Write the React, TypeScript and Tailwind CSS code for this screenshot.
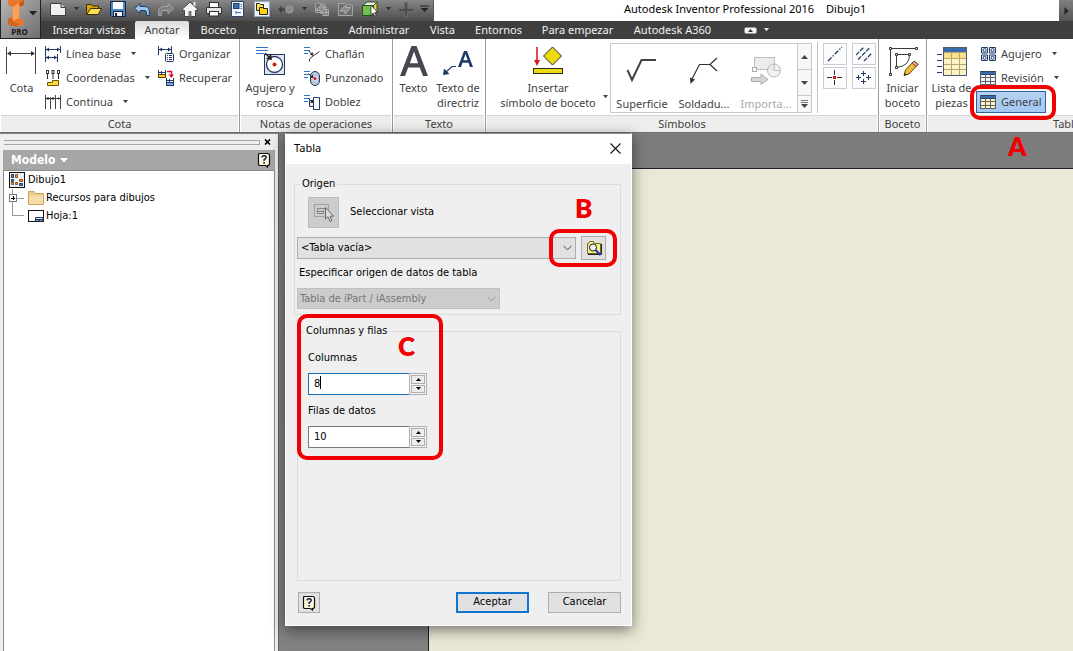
import React from 'react';

const NAVY = '#1f3864';

function Icon({ w = 16, h = 16, children, crisp = false }: { w?: number; h?: number; children: React.ReactNode; crisp?: boolean }) {
  return (
    <svg width={w} height={h} viewBox={`0 0 ${w} ${h}`} fill="none" className="shrink-0" aria-hidden="true" shapeRendering={crisp ? 'crispEdges' : undefined}>
      {children}
    </svg>
  );
}

function Caret({ fill = '#444' }: { fill?: string }) {
  return (
    <Icon w={7} h={4}>
      <path d="M1 0H6L3.5 3.2Z" fill={fill} />
    </Icon>
  );
}

/* ---------- quick access toolbar ---------- */

function QatButton({ label, children, narrow = false }: { label: string; children: React.ReactNode; narrow?: boolean }) {
  return (
    <button aria-label={label} className={`flex h-[18px] shrink-0 items-center justify-center ${narrow ? 'w-3' : 'w-6'}`}>
      {children}
    </button>
  );
}

function QuickAccess() {
  return (
    <div className="flex h-full w-[393px] shrink-0 items-start overflow-hidden border-r border-[#555] bg-linear-to-b from-[#888] to-[#4c4c4c] pl-[5px]">
      <QatButton label="Nuevo">
        <Icon>
          <path d="M.5 2.5H11L15.5 6.5V14.5H.5Z" fill="#f1f1f1" stroke="#3c4148" />
          <path d="M11 2.5V6.5H15.5" fill="#c8ccd1" stroke="#3c4148" />
        </Icon>
      </QatButton>
      <QatButton label="Opciones de nuevo" narrow><Caret fill="#333" /></QatButton>
      <QatButton label="Abrir">
        <Icon>
          <path d="M.5 13V3.5H5L6.5 5H12.5V8" fill="#d9a514" stroke="#3d2f05" />
          <path d="M.8 13.5L4.5 7.5H15.5L12 13.5Z" fill="#ffdf5a" stroke="#3d2f05" />
        </Icon>
      </QatButton>
      <QatButton label="Guardar">
        <Icon>
          <path d="M.5 .5H15.5V15.5H2L.5 14Z" fill="#4c86c6" stroke="#14233f" />
          <rect x="3" y="1" width="10" height="7" fill="#fff" />
          <rect x="3.500" y="10.500" width="9" height="5" fill="#f4f4f4" stroke="#14233f" />
          <rect x="5" y="12" width="2" height="3" fill="#14233f" />
        </Icon>
      </QatButton>
      <QatButton label="Deshacer">
        <Icon>
          <path d="M.7 7.5L6 2.500V5.5H10C14 5.5 15.300 8 15.300 10V14.5H12.5V11.5C12.500 10 11.500 9.500 10 9.500H6V12.500Z" fill="#9cc6ee" stroke="#1c3f6c" />
        </Icon>
      </QatButton>
      <QatButton label="Rehacer">
        <Icon>
          <path d="M15.300 7.500L10 2.500V5.500H6C2 5.500 .7 8 .7 10V14.500H3.500V11.500C3.500 10 4.500 9.500 6 9.500H10V12.500Z" fill="#808080" stroke="#a6a6a6" />
        </Icon>
      </QatButton>
      <QatButton label="Inicio">
        <Icon>
          <path d="M8 1L15.500 8V9.500H13.500V15.500H2.500V9.500H.5V8Z" fill="#f5f5f5" stroke="#444" />
          <path d="M11.500 1H13.500V5.500L11.500 4Z" fill="#eee" />
          <path d="M6.500 10H9.500V15.500H6.500Z" fill="#777" />
        </Icon>
      </QatButton>
      <QatButton label="Imprimir">
        <Icon>
          <rect x="3.500" y="1.500" width="9" height="5" fill="#fff" stroke="#333" />
          <path d="M1 6.500H15Q15.500 6.500 15.500 7V12.500H.5V7Q.5 6.500 1 6.500Z" fill="#e4e4e4" stroke="#333" />
          <rect x="3.500" y="10.500" width="9" height="4.500" fill="#fff" stroke="#333" />
        </Icon>
      </QatButton>
      <QatButton label="Propiedades">
        <Icon>
          <rect x="1.500" y=".5" width="12" height="15" fill="#f4f7fb" stroke="#2c4566" />
          <rect x="3.500" y="2.500" width="5.500" height="5" fill="#3970ad" stroke="#1c3f6c" />
          <path d="M10.500 3.500H12M10.500 5.500H12M10.500 7.500H12M6 11.500H11M6 10V13" stroke="#3970ad" />
        </Icon>
      </QatButton>
      <QatButton label="Proyectos">
        <Icon>
          <rect x=".5" y=".5" width="15" height="15" fill="#eef4fb" stroke="#93a9c2" />
          <path d="M2.500 9.500V2.500H5.500L6.500 3.500H9.500V9.500Z" fill="#ffe14d" stroke="#222" />
          <path d="M5.500 13.500V6.500H8.500L9.500 7.500H13.500V13.500Z" fill="#ffd400" stroke="#222" />
        </Icon>
      </QatButton>
      <QatButton label="Retorno">
        <Icon>
          <circle cx="11.500" cy="8.500" r="3.600" fill="#8a8a8a" stroke="#9d9d9d" />
          <path d="M0 8.500L4 5V7.500H7V9.500H4V12Z" fill="#3f3f3f" />
        </Icon>
      </QatButton>
      <QatButton label="Opciones de retorno" narrow><Caret fill="#2f2f2f" /></QatButton>
      <QatButton label="Actualizar todo">
        <Icon>
          <path d="M1.500 3L5 1.500L6 3H10.500V11.500H1.500Z" stroke="#a6a6a6" fill="#6f6f6f" />
          <path d="M2 9L8 3.500V6H12.500L7 13V10Z" fill="#8a8a8a" stroke="#b5b5b5" />
          <path d="M9 8.500H14.500V14.500H9Z" fill="#777" stroke="#aaa" />
          <path d="M12 9V14M9.500 11.500H14.500" stroke="#b5b5b5" />
        </Icon>
      </QatButton>
      <QatButton label="Actualizar">
        <Icon>
          <path d="M.5 2.500H8L9.500 4H14.500V14.500H.5Z" fill="#6f6f6f" stroke="#a6a6a6" />
          <path d="M2 10L8 4V6.500H12.500L7 13V10Z" fill="#8a8a8a" stroke="#b5b5b5" />
        </Icon>
      </QatButton>
      <QatButton label="Seleccionar">
        <Icon>
          <path d="M1 4.500L5 1H15L12 4.500Z" fill="#eef6e4" stroke="#2f4f22" />
          <path d="M11.500 4.500L15 1V11L11.500 14.500Z" fill="#e6ce3d" stroke="#2f4f22" />
          <rect x=".5" y="4.500" width="10.500" height="10" fill="#6fbf4a" stroke="#2f4f22" />
          <path d="M9 4V14L11.200 12L12.700 15.200L14.200 14.500L12.700 11.500H15.500Z" fill="#fff" stroke="#222" strokeWidth=".7" />
        </Icon>
      </QatButton>
      <QatButton label="Opciones de selección" narrow><Caret fill="#2f2f2f" /></QatButton>
      <QatButton label="Añadir">
        <Icon>
          <path d="M6.500 1.500H9.500V7.500H15.500V10.500H9.500V15.500H6.500V10.500H.5V7.500H6.500Z" fill="#4d4d4d" stroke="#6a6a6a" />
        </Icon>
      </QatButton>
      <QatButton label="Personalizar" narrow>
        <Icon w={9} h={8}>
          <path d="M0 1H9" stroke="#262626" />
          <path d="M.5 3H8.500L4.500 7Z" fill="#262626" />
        </Icon>
      </QatButton>
    </div>
  );
}

/* ---------- ribbon ---------- */

function Tab({ children, width, active = false }: { children: React.ReactNode; width: string; active?: boolean }) {
  return (
    <button
      role="tab"
      aria-selected={active}
      className={`flex h-full shrink-0 items-center justify-center whitespace-nowrap ${width} ${active ? 'rounded-t-[2px] bg-linear-to-b from-[#dcdcdc] to-white text-[#3c3c3c]' : 'text-[#f0f0f0]'}`}
    >
      {children}
    </button>
  );
}

function Panel({ title, width, children }: { title: string; width: string; children: React.ReactNode }) {
  return (
    <section className={`flex h-full shrink-0 flex-col border-r border-[#9c9c9c] ${width}`}>
      <div className="flex h-[76px] pt-[3px]">{children}</div>
      <h2 className="mx-px flex flex-1 items-center justify-center border-t border-[#d5d5d5] bg-[#eeeeee]">{title}</h2>
    </section>
  );
}

function BigButton({ icon, lines, width }: { icon: React.ReactNode; lines: string[]; width: string }) {
  return (
    <button className={`flex shrink-0 flex-col items-center whitespace-nowrap leading-[15px] ${width}`}>
      <span className="flex h-[38px] items-center justify-center">{icon}</span>
      {lines.map((l) => (
        <span key={l}>{l}</span>
      ))}
    </button>
  );
}

function RowButton({ icon, label, drop = false }: { icon: React.ReactNode; label: string; drop?: boolean }) {
  return (
    <button className="flex h-6 items-center gap-[5px] whitespace-nowrap">
      {icon}
      <span>{label}</span>
      {drop && (
        <span className="pl-1">
          <Caret />
        </span>
      )}
    </button>
  );
}

function NoteLines() {
  return <path d="M0 1.500H6M0 4.500H6M0 7.500H4" stroke="#2f74c0" />;
}

function TableIcon({ fill = '#fff3bf' }: { fill?: string }) {
  return (
    <Icon crisp>
      <rect x="0" y="1" width="16" height="14" fill={fill} />
      <rect x="0" y="1" width="16" height="3" fill="#3b6ca8" />
      <path d="M.5 1V15M5.500 4V15M10.500 4V15M15.500 1V15M0 7.500H16M0 11.500H16M0 14.500H16" stroke="#5a636c" />
      <path d="M0 1.500H16M0 4.500H16" stroke="#2c4a70" />
    </Icon>
  );
}

function ToolTile({ label, children }: { label: string; children: React.ReactNode }) {
  return (
    <button aria-label={label} className="flex h-[22px] w-6 items-center justify-center border border-[#c9ced6] bg-[#fcfcfc]">
      {children}
    </button>
  );
}

function GalleryItem({ label, children, muted = false }: { label: string; children: React.ReactNode; muted?: boolean }) {
  return (
    <button disabled={muted} className={`flex w-[62px] shrink-0 flex-col items-center whitespace-nowrap leading-[15px] ${muted ? 'text-[#a9a9a9]' : ''}`}>
      <span className="flex h-[52px] items-center justify-center">{children}</span>
      <span>{label}</span>
    </button>
  );
}

function Ribbon() {
  return (
    <div className="flex h-[94px] shrink-0 overflow-hidden border-b border-[#6d6d6d] bg-white text-[11px] text-[#3f3f3f]">
      <Panel title="Cota" width="w-[240px]">
        <BigButton
          width="w-[43px]"
          lines={['Cota']}
          icon={
            <Icon w={31} h={28}>
              <path d="M.5 0V27M29.500 0V27M2 6.500H28" stroke="#444" />
              <path d="M1 6.500L5 4V9ZM29 6.500L25 4V9Z" fill="#333" />
            </Icon>
          }
        />
        <div className="flex w-[115px] flex-col items-start pl-[2px]">
          <RowButton
            drop
            label="Línea base"
            icon={
              <Icon>
                <path d="M.5 0V16M15.500 0V7M12.500 8V16M1 3.500H15M1 11.500H12" stroke={NAVY} />
                <path d="M1 3.500L4 1.500V5.500ZM15 3.500L12 1.500V5.500ZM1 11.500L4 9.500V13.500ZM12 11.500L9 9.500V13.500Z" fill={NAVY} />
              </Icon>
            }
          />
          <RowButton
            drop
            label="Coordenadas"
            icon={
              <Icon>
                <path d="M2.500 3V9M8 3V9M13.500 3V9" stroke="#333" />
                <rect x="1.500" y=".5" width="2" height="3" fill="#fff" stroke="#333" />
                <rect x="7" y=".5" width="2" height="3" fill="#fff" stroke="#333" />
                <rect x="12.500" y=".5" width="2" height="3" fill="#fff" stroke="#333" />
                <path d="M2.500 12.500H7.500V10.500H13.500V15.500H2.500Z" fill="#ffdd3c" stroke="#6b5600" />
              </Icon>
            }
          />
          <RowButton
            drop
            label="Continua"
            icon={
              <Icon>
                <path d="M.5 1V15M5.500 3V15M10.500 1V15M15.500 1V15M1 4.500H15" stroke="#444" />
                <path d="M1 4.500L3 3V6ZM5 4.500L3 3V6ZM6 4.500L8 3V6ZM10 4.500L8 3V6ZM15 4.500L13 3V6Z" fill="#333" />
              </Icon>
            }
          />
        </div>
        <div className="flex flex-col items-start">
          <RowButton
            label="Organizar"
            icon={
              <Icon>
                <path d="M.5 0V9M13.500 0V7M1 3.500H13" stroke={NAVY} />
                <path d="M1 3.500L4 1.500V5.500ZM13 3.500L10 1.500V5.500Z" fill={NAVY} />
                <rect x="7.500" y="7.500" width="8" height="8" rx="1" fill="#fff" stroke={NAVY} />
                <path d="M9 9.500H10M11 9.500H14M9 11.500H10M11 11.500H14M9 13.500H10M11 13.500H14" stroke={NAVY} />
              </Icon>
            }
          />
          <RowButton
            label="Recuperar"
            icon={
              <Icon>
                <path d="M.5 0V4M3.500 1V4M7.500 0V4M1 2.500H7" stroke={NAVY} />
                <rect x=".5" y="4.500" width="7" height="3" fill="#ffc928" stroke="#5f4700" />
                <path d="M9 1.500H13.500V5" stroke="#d0161b" strokeWidth="1.500" />
                <path d="M10.500 4.500H16L13.300 8Z" fill="#d0161b" />
                <path d="M8.500 8V12M11.500 9V12M15.500 8V12M9 10.500H15" stroke={NAVY} />
                <rect x="8.500" y="12.500" width="7" height="3" fill="#72a9e6" stroke={NAVY} />
              </Icon>
            }
          />
        </div>
      </Panel>

      <Panel title="Notas de operaciones" width="w-[153px]">
        <BigButton
          width="w-[60px]"
          lines={['Agujero y', 'rosca']}
          icon={
            <Icon w={31} h={32}>
              <path d="M1 2.500H13M1 5.500H13M1 8.500H9" stroke="#2f74c0" />
              <rect x="9.500" y="9.500" width="20" height="20" fill="#dfe5ec" stroke={NAVY} />
              <circle cx="19.500" cy="19.500" r="8" fill="#fff" stroke={NAVY} strokeWidth="1.300" />
              <circle cx="19.500" cy="19.500" r="2" fill="#d0161b" />
              <path d="M10 8L14 12" stroke="#222" strokeWidth="1.300" />
              <path d="M17 15L11 14L16 9Z" fill="#222" />
            </Icon>
          }
        />
        <div className="flex flex-col items-start pl-1">
          <RowButton
            label="Chaflán"
            icon={
              <Icon>
                <NoteLines />
                <path d="M5 5L8 8.500M5.500 15.500V13L9 10L15.500 5.500" stroke="#333" />
                <path d="M9.500 10L6 8.500L8.500 6Z" fill="#222" />
              </Icon>
            }
          />
          <RowButton
            label="Punzonado"
            icon={
              <Icon>
                <NoteLines />
                <rect x="6.500" y="1.500" width="9" height="14" rx="4.500" fill="#b9c8d8" stroke={NAVY} />
                <circle cx="11" cy="8.500" r="2.500" fill="#e3eaf2" />
                <circle cx="11" cy="8.500" r="1.500" fill="#d0161b" />
                <path d="M4.500 3.500L8 7" stroke="#222" />
                <path d="M9.500 8L6 7.500L9 4.500Z" fill="#222" />
              </Icon>
            }
          />
          <RowButton
            label="Doblez"
            icon={
              <Icon>
                <NoteLines />
                <path d="M5.500 6.500H15.500V12.500H12.500V15.500H9.500V12.500H5.500Z" fill="#e6ebf1" stroke={NAVY} />
                <path d="M9.500 3.500H15.500V15.500H9.500Z" fill="#f7f9fb" stroke={NAVY} />
                <path d="M4.500 4.500L8 8" stroke="#222" />
                <path d="M9.500 9L6 8.500L9 5.500Z" fill="#222" />
              </Icon>
            }
          />
        </div>
      </Panel>

      <Panel title="Texto" width="w-[93px]">
        <BigButton
          width="w-[41px]"
          lines={['Texto']}
          icon={
            <Icon w={30} h={32}>
              <path d="M1 31L12.500 1H17.500L29 31H24L20.800 22.500H9.200L6 31ZM10.800 18.300H19.200L15 6.500Z" fill="#474752" fillRule="evenodd" />
            </Icon>
          }
        />
        <BigButton
          width="w-[48px]"
          lines={['Texto de', 'directriz']}
          icon={
            <Icon w={32} h={28}>
              <path d="M16 20L22 4H25L31 20H28L26.500 15.800H20.500L19 20ZM21.300 13.300H25.700L23.500 7Z" fill={NAVY} fillRule="evenodd" />
              <path d="M14 19.500H10L4 25" stroke={NAVY} strokeWidth="1.200" />
              <path d="M1 28L2 21.500L7.500 27Z" fill={NAVY} />
            </Icon>
          }
        />
      </Panel>

      <Panel title="Símbolos" width="w-[393px]">
        <BigButton
          width="w-[124px]"
          lines={['Insertar', 'símbolo de boceto']}
          icon={
            <Icon w={32} h={30}>
              <path d="M5 1V15" stroke="#d0161b" strokeWidth="1.500" />
              <path d="M2 14H8L5 20Z" fill="#d0161b" />
              <path d="M20.500 1L29.500 10L20.500 19L11.500 10Z" fill="#eed90f" stroke="#2a2a2a" />
              <rect x="1.500" y="22.500" width="29" height="5" fill="#eed90f" stroke="#2a2a2a" />
            </Icon>
          }
        />
        <div className="-ml-2 flex w-[7px] items-end pb-4">
          <Caret />
        </div>
        <div className="mt-px ml-auto flex h-[70px] w-[202px] border border-[#c4c9d0]">
          <GalleryItem label="Superficie">
            <Icon w={32} h={28}>
              <path d="M1.500 14L6 24L15.500 4H30" stroke="#444" strokeWidth="2" />
            </Icon>
          </GalleryItem>
          <GalleryItem label="Soldadu...">
            <Icon w={30} h={30}>
              <path d="M3 24L10.500 9.500H21L28 3M21 9.500L28 16" stroke="#333" strokeWidth="1.200" />
              <path d="M1.500 29L1 22.500L6 24.500Z" fill="#333" />
            </Icon>
          </GalleryItem>
          <GalleryItem label="Importa..." muted>
            <Icon w={32} h={30}>
              <rect x="4.500" y="2.500" width="20" height="12" fill="#ececec" stroke="#bdbdbd" />
              <circle cx="24" cy="15.500" r="6.500" fill="#efefef" fillOpacity=".8" stroke="#b5b5b5" />
              <path d="M24 9V15.500H30" stroke="#bdbdbd" />
              <rect x="2.500" y="12.500" width="4" height="4" fill="#fff" stroke="#aaa" />
              <path d="M1.500 22.500H11V19L18 24.500L11 29.500V26.500H1.500Z" fill="#d6d6d6" stroke="#aaa" />
            </Icon>
          </GalleryItem>
          <div className="flex flex-1 flex-col border-l border-[#c4c9d0] bg-[#f7f7f7]">
            <button aria-label="Anterior" className="flex flex-[26] items-center justify-center"><Icon w={7} h={4}><path d="M0 4H7L3.500 0Z" fill="#444" /></Icon></button>
            <button aria-label="Siguiente" className="flex flex-[26] items-center justify-center border-y border-[#c4c9d0]"><Icon w={7} h={4}><path d="M0 0H7L3.500 4Z" fill="#444" /></Icon></button>
            <button aria-label="Más símbolos" className="flex flex-[16] items-center justify-center"><Icon w={7} h={8}><path d="M0 .5H7M0 2.500H7" stroke="#777" /><path d="M0 4H7L3.500 8Z" fill="#444" /></Icon></button>
          </div>
        </div>
        <div className="mr-[5px] ml-[5px] h-[71px] w-px bg-[#c0c0c0]" />
        <div className="mt-px mr-[2px] grid grid-cols-2 content-start gap-x-[5px] gap-y-[2px]">
          <ToolTile label="Línea de centro">
            <Icon><path d="M1 15L15 1" stroke={NAVY} strokeWidth="1.300" strokeDasharray="5 1.500 1.500 1.500" /></Icon>
          </ToolTile>
          <ToolTile label="Bisectriz de línea de centro">
            <Icon><path d="M0 9L8 1M2 13.500L14 1.500M8 15L16 7" stroke={NAVY} strokeWidth="1.200" strokeDasharray="4.500 1.200" /></Icon>
          </ToolTile>
          <ToolTile label="Marca de centro">
            <Icon>
              <path d="M7.500 0V5M7.500 10V15M0 7.500H5M10 7.500H15" stroke="#333" />
              <rect x="6" y="6" width="3" height="3" fill="#d0161b" />
            </Icon>
          </ToolTile>
          <ToolTile label="Patrón centrado">
            <Icon><path d="M7.500 1V6M5 3.500H10M2.500 5V10M0 7.500H5M12.500 5V10M10 7.500H15M7.500 9V14M5 11.500H10" stroke={NAVY} /></Icon>
          </ToolTile>
        </div>
      </Panel>

      <Panel title="Boceto" width="w-[48px]">
        <BigButton
          width="w-[47px]"
          lines={['Iniciar', 'boceto']}
          icon={
            <Icon w={32} h={32}>
              <path d="M3 3.500H29M3.500 4V29M9.500 9.500H22.500Q23 21 9.500 22.500Z" stroke="#3c3c3c" />
              <path d="M2.500 2.500H4.500V4.500H2.500ZM28.500 2.500H30.500V4.500H28.500ZM2.500 28.500H4.500V30.500H2.500ZM8.500 8.500H10.500V10.500H8.500ZM21.500 8.500H23.500V10.500H21.500ZM8.500 21.500H10.500V23.500H8.500Z" fill="#fff" stroke="#333" />
              <path d="M27 16L31 19.500L22 29L17 30.500L18.500 25Z" fill="#f5bd35" stroke="#60430c" />
              <path d="M27 16L31 19.500L29 21.500L25 18Z" fill="#e9aaa0" stroke="#60430c" />
              <path d="M17 30.500L17.600 28L19.500 29.500Z" fill="#222" />
            </Icon>
          }
        />
      </Panel>

      <Panel title="Tabla" width="w-[280px]">
        <BigButton
          width="w-[49px]"
          lines={['Lista de', 'piezas']}
          icon={
            <Icon w={32} h={32} crisp>
              <path d="M1 9.500H6M1 15.500H6M1 21.500H6M1 27.500H6" stroke={NAVY} />
              <rect x="7.500" y="2.500" width="23" height="28" fill="#fdf3c4" stroke="#4f5c69" />
              <rect x="8" y="8" width="22" height="6" fill="#fbe08c" />
              <rect x="8" y="3" width="22" height="4" fill="#3b6ca8" />
              <path d="M8 7.500H30M15.500 8V30M23.500 8V30M8 13.500H30M8 19.500H30M8 24.500H30" stroke="#b3a878" />
            </Icon>
          }
        />
        <div className="flex flex-col items-start">
          <div className="pl-1">
            <RowButton
              drop
              label="Agujero"
              icon={
                <Icon>
                  <path d="M1.500 1.500H7.500V7H1.500ZM9.500 1.500H15.500V7H9.500ZM1.500 9H7.500V14.500H1.500ZM9.500 9H15.500V14.500H9.500Z" fill="#e3ecf6" stroke={NAVY} />
                  <circle cx="4.500" cy="4.200" r="1.500" fill="#fff" stroke={NAVY} />
                  <circle cx="12.500" cy="4.200" r="1.500" fill="#fff" stroke={NAVY} />
                  <circle cx="4.500" cy="11.800" r="1.500" fill="#fff" stroke={NAVY} />
                  <circle cx="12.500" cy="11.800" r="1.500" fill="#fff" stroke={NAVY} />
                </Icon>
              }
            />
          </div>
          <div className="pl-1">
            <RowButton drop label="Revisión" icon={<TableIcon fill="#f4f4f4" />} />
          </div>
          <button className="mt-px flex h-[22px] items-center gap-[5px] border border-[#2f639b] bg-linear-to-b from-[#b4d2f3] to-[#a3c8ef] pr-[3px] pl-[3px]">
            <TableIcon />
            General
          </button>
        </div>
        <div className="ml-[21px] h-[71px] w-px bg-[#c0c0c0]" />
      </Panel>
    </div>
  );
}

/* ---------- browser tree ---------- */

function HelpGlyph() {
  return (
    <Icon w={14} h={16}>
      <path d="M2.500 1.500H10.500Q12.500 1.500 12.500 3.500V11.500Q12.500 13.500 10.500 13.500V15L8.500 13.500H2.500Q1.500 13.500 1.500 11.500V2.500Q1.500 1.500 2.500 1.500Z" fill="#fffdd6" stroke="#111" strokeWidth="1.200" />
      <path d="M5 5.500Q5 3.700 7 3.700Q9.200 3.700 9.200 5.400Q9.200 6.600 7.100 7.500V9" stroke="#14145c" strokeWidth="1.400" />
      <rect x="6.300" y="10" width="1.600" height="1.600" fill="#14145c" />
    </Icon>
  );
}

function BrowserPanel() {
  return (
    <aside className="flex w-[278px] shrink-0 flex-col bg-[#efefef] pr-[3px] pl-[3px] text-[11px]">
      <div className="flex h-4 items-center pl-px">
        <div className="h-[5px] flex-1 border border-[#a5a5a5] border-l-0" />
        <button aria-label="Cerrar navegador" className="flex h-4 w-[15px] items-center justify-center">
          <Icon w={7} h={6}><path d="M1 .5L6 5.500M6 .5L1 5.500" stroke="#000" strokeWidth="1.600" /></Icon>
        </button>
      </div>
      <div className="flex h-5 items-center justify-between bg-[#a6a6a6] pr-1 pl-2">
        <button className="flex items-center gap-[5px] font-['DejaVu_Sans_Condensed',sans-serif] text-xs font-bold text-white">
          Modelo
          <Icon w={8} h={5}><path d="M0 0H8L4 4.500Z" fill="#fff" /></Icon>
        </button>
        <button aria-label="Ayuda"><HelpGlyph /></button>
      </div>
      <ul className="flex-1 border border-b-0 border-[#8c8c8c] bg-white pl-[5px] leading-[18px]">
        <li className="flex h-[18px] items-center gap-[3px]">
          <Icon>
            <rect x=".5" y=".5" width="15" height="15" fill="#eaf2fb" stroke="#111" />
            <path d="M6.500 2.500H8.500V5.500H6.500ZM10.500 7.500H13.500V9.500H10.500ZM6.500 10.500H8.500V12.500H6.500ZM2.500 10.500H4.500V12.500H2.500Z" fill="#e9a13c" stroke="#9a4d10" />
            <path d="M2.500 2.500H4.500V5.500H2.500ZM2.500 7.500H4.500V9.500H2.500ZM10.500 11.500H13.500V13.500H10.500Z" fill="#4e82c0" stroke="#1e3c66" />
          </Icon>
          Dibujo1
        </li>
        <li className="flex h-[18px] items-center">
          <Icon w={19} h={18} crisp>
            <path d="M3.500 0V5M3.500 13V18M8 9.500H15" stroke="#999" />
            <rect x=".5" y="5.500" width="7" height="7" fill="#fff" stroke="#777" />
            <path d="M2 9.500H6M4.500 7V11" stroke="#000" />
          </Icon>
          <Icon>
            <path d="M.5 14.500V1.500H6L7.500 3.500H15.500V14.500Z" fill="#eccb8a" stroke="#c9a35b" />
            <path d="M1 14V5.500H15V14Z" fill="#f5dca8" />
          </Icon>
          <span className="pl-[2px]">Recursos para dibujos</span>
        </li>
        <li className="flex h-[18px] items-center">
          <Icon w={19} h={18} crisp>
            <path d="M3.500 0V8.500H15" stroke="#999" />
          </Icon>
          <Icon>
            <rect x=".5" y="2.500" width="15" height="11" fill="#fff" stroke="#111" />
            <path d="M7.500 9.500H15V13H7.500ZM7.500 11.500H15M11.500 11.500V13" fill="#dfe7f3" stroke={NAVY} />
          </Icon>
          <span className="pl-[2px]">Hoja:1</span>
        </li>
      </ul>
    </aside>
  );
}

/* ---------- dialog ---------- */

function Chevron({ stroke = '#444' }: { stroke?: string }) {
  return (
    <Icon w={9} h={6}>
      <path d="M.5 .8L4.500 4.800L8.500 .8" stroke={stroke} />
    </Icon>
  );
}

function Spinner({ id, label, value, focused = false }: { id: string; label: string; value: string; focused?: boolean }) {
  return (
    <div className="flex flex-col">
      <label htmlFor={id} className="leading-[14px]">{label}</label>
      <div className="mt-2 flex h-[22px] w-[119px]">
        <div className="relative flex-1">
          <input
            id={id}
            defaultValue={value}
            className={`h-full w-full border border-r-0 bg-white pb-[2px] pl-[5px] outline-none ${focused ? 'border-[#1a6fbd]' : 'border-[#7a7a7a]'}`}
          />
          {focused && <span className="absolute top-[3px] left-[12px] h-[13px] w-px bg-black" />}
        </div>
        <div className="flex w-[18px] flex-col gap-px border border-[#b0b0b0] bg-[#f4f4f4] p-px">
          <button aria-label={`Aumentar ${label}`} className="flex flex-1 items-center justify-center border border-[#adadad] bg-[#ececec]">
            <Icon w={5} h={3}><path d="M0 3H5L2.500 0Z" fill="#000" /></Icon>
          </button>
          <button aria-label={`Reducir ${label}`} className="flex flex-1 items-center justify-center border border-[#adadad] bg-[#ececec]">
            <Icon w={5} h={3}><path d="M0 0H5L2.500 3Z" fill="#000" /></Icon>
          </button>
        </div>
      </div>
    </div>
  );
}

function TableDialog() {
  return (
    <div role="dialog" aria-labelledby="dlg-title" className="absolute top-[133px] left-[285px] w-[347px] border border-t-[#8a8a8a] border-r-white border-b-white border-l-white bg-[#efefef] text-[11px] text-black shadow-[0_4px_14px_rgba(0,0,0,0.5)]">
      <div className="flex h-[30px] items-center justify-between bg-white pr-[10px] pb-[2px] pl-2">
        <h1 id="dlg-title" className="font-['Noto_Sans',sans-serif]">Tabla</h1>
        <button aria-label="Cerrar">
          <Icon w={11} h={11}><path d="M.5 .5L10.500 10.500M10.500 .5L.5 10.500" stroke="#111" strokeWidth="1.100" /></Icon>
        </button>
      </div>
      <div className="pt-[13px] pr-[10px] pb-3 pl-2">
        <fieldset className="border border-[#dcdcdc] px-[2px] pb-[5px]">
          <legend className="ml-[3px] px-[2px] leading-[14px]">Origen</legend>
          <div className="flex items-center gap-[11px] pt-[6px] pl-[11px]">
            <button aria-labelledby="sel-vista" className="flex size-[31px] items-center justify-center border border-[#bcbcbc] bg-[#cccccc]">
              <Icon w={22} h={20}>
                <rect x="1.500" y="1.500" width="14" height="12" stroke="#777" strokeDasharray="1 1" />
                <path d="M4 5.500H12M4 8.500H10M4 10.500H10M4.500 5V11M10.500 7V11" stroke="#8a8a8a" />
                <path d="M12.500 4.500V16L15 13.800L17 18.500L19 17.500L17 13.200H20.500Z" fill="#dedede" stroke="#666" />
              </Icon>
            </button>
            <span id="sel-vista">Seleccionar vista</span>
          </div>
          <div className="flex items-center gap-[5px] pt-2">
            <div className="relative w-[279px]">
              <select aria-label="Origen" className="h-[22px] w-full appearance-none border border-[#adadad] bg-[#e1e1e1] pt-px pl-[3px] outline-none">
                <option>&lt;Tabla vacía&gt;</option>
              </select>
              <span className="pointer-events-none absolute inset-y-0 right-1 flex items-center"><Chevron /></span>
            </div>
            <button aria-label="Examinar" className="flex h-6 w-[25px] items-center justify-center border border-[#adadad] bg-[#e1e1e1]">
              <Icon>
                <path d="M1.500 13.500V3.500H2.500L3.500 1.500H7.500L8.500 3.500H14.500V13.500Z" fill="#f5f08a" stroke="#6b6a1c" />
                <path d="M15.500 4V14.500H2" stroke="#222" />
                <circle cx="7" cy="7.500" r="3.600" fill="#e8eef0" stroke="#222" />
                <path d="M9.500 10L14.500 15" stroke="#1b2fb0" strokeWidth="2" />
              </Icon>
            </button>
          </div>
          <label htmlFor="origen-datos" className="mt-[6px] block pl-[2px] leading-[14px]">Especificar origen de datos de tabla</label>
          <div className="relative mt-2 w-[203px]">
            <select id="origen-datos" disabled className="h-[21px] w-full appearance-none border border-[#bfbfbf] bg-[#cccccc] pt-px pl-[2px] text-[#757575] opacity-100 outline-none">
              <option>Tabla de iPart / iAssembly</option>
            </select>
            <span className="pointer-events-none absolute inset-y-0 right-1 flex items-center"><Chevron stroke="#999" /></span>
          </div>
        </fieldset>
        <fieldset className="mt-[9px] ml-[3px] h-[257px] border border-[#dcdcdc] pl-[10px]">
          <legend className="-ml-[4px] px-[2px] leading-[14px]">Columnas y filas</legend>
          <div className="flex flex-col gap-[9px] pt-[13px]">
            <Spinner id="columnas" label="Columnas" value="8" focused />
            <Spinner id="filas" label="Filas de datos" value="10" />
          </div>
        </fieldset>
        <div className="mt-[11px] flex items-center pl-1">
          <button aria-label="Ayuda del cuadro de diálogo" className="flex h-[21px] w-[22px] items-center justify-center border border-[#adadad] bg-[#e1e1e1]">
            <HelpGlyph />
          </button>
          <button className="ml-auto h-[21px] w-[73px] border-2 border-[#0f75cf] bg-[#e1e1e1]">Aceptar</button>
          <button className="ml-[19px] h-[21px] w-[73px] border border-[#adadad] bg-[#e1e1e1]">Cancelar</button>
        </div>
      </div>
    </div>
  );
}

/* ---------- callouts ---------- */

function Callouts() {
  const ring = 'pointer-events-none absolute rounded-[10px] border-4 border-[#f00000]';
  const letter = "pointer-events-none absolute font-['Lato',sans-serif] text-[26px] leading-[30px] font-extrabold text-[#f00000]";
  return (
    <>
      <div className={`${ring} top-[85px] left-[970px] h-[35px] w-[86px]`} />
      <span className={`${letter} top-[131px] left-[1008px]`}>A</span>
      <div className={`${ring} top-[229px] left-[549px] h-[38px] w-[68px]`} />
      <span className={`${letter} top-[193px] left-[575px]`}>B</span>
      <div className={`${ring} top-[314px] left-[297px] h-[146px] w-[146px]`} />
      <span className={`${letter} top-[331px] left-[398px]`}>C</span>
    </>
  );
}

export default function App() {
  return (
    <div className="relative flex min-h-screen flex-col overflow-hidden bg-[#808080] font-['Noto_Sans',sans-serif]">
      <header className="flex h-[39px] shrink-0 bg-[#3f3f3f] text-[11px]">
        <button aria-label="Menú de la aplicación" className="flex w-[41px] shrink-0 flex-col items-center border border-t-0 border-[#222] bg-linear-to-br from-[#b5b5b5] to-[#6f6f6f]">
          <span className="flex w-full items-center gap-1 pl-[6px]">
            <Icon w={18} h={26}>
              <path d="M1 0H17V5L12.500 7V18L17 20.500V24L14 26H4L1 24V19L5.500 17V7L1 4.500Z" fill="#e8762d" />
              <path d="M5.500 7L12.500 3V18L5.500 21Z" fill="#f6a15c" />
              <path d="M1 19L5.500 17V21L12 24L10 26H4L1 24Z" fill="#d4631f" />
              <path d="M12.500 7L17 5V0L12.500 3Z" fill="#c7571a" />
            </Icon>
            <Icon w={8} h={5}><path d="M0 0H8L4 4.500Z" fill="#222" /></Icon>
          </span>
          <span className="w-full pr-[2px] text-center text-[8px] leading-3 font-bold text-[#1a1a1a]">PRO</span>
        </button>
        <div className="flex min-w-0 flex-1 flex-col">
          <div className="flex h-[21px] bg-white">
            <QuickAccess />
            <div className="flex flex-1 items-center gap-3 pb-[3px] pl-[190px] whitespace-pre text-black">
              <span>Autodesk Inventor Professional 2016</span>
              <span>Dibujo1</span>
            </div>
            <button aria-label="Expandir búsqueda" className="flex w-[14px] items-center justify-center bg-linear-to-b from-[#808080] to-[#555]">
              <Icon w={5} h={8}><path d="M.5 0L4.500 4L.5 8Z" fill="#222" /></Icon>
            </button>
          </div>
          <div role="tablist" className="flex h-[18px] items-center overflow-hidden pl-[2px]">
            <Tab width="w-[92px]">Insertar vistas</Tab>
            <Tab width="w-[54px]" active>Anotar</Tab>
            <Tab width="w-[59px]">Boceto</Tab>
            <Tab width="w-[89px]">Herramientas</Tab>
            <Tab width="w-[84px]">Administrar</Tab>
            <Tab width="w-[43px]">Vista</Tab>
            <Tab width="w-[69px]">Entornos</Tab>
            <Tab width="w-[89px]">Para empezar</Tab>
            <Tab width="w-[101px]">Autodesk A360</Tab>
            <button aria-label="Minimizar cinta" className="ml-[21px] flex items-center gap-[5px]">
              <Icon w={14} h={7}>
                <rect x=".5" y=".5" width="12" height="6" rx="1.500" fill="#f4f4f4" />
                <path d="M4 5H9L6.500 2Z" fill="#333" />
              </Icon>
              <Caret fill="#e8e8e8" />
            </button>
          </div>
        </div>
      </header>
      <Ribbon />
      <div className="flex flex-1 pt-px font-['DejaVu_Sans_Condensed',sans-serif]">
        <BrowserPanel />
        <main className="flex flex-1 border-l border-[#5f5f5f] bg-linear-to-b from-[#7c7c7c] to-[#828282] pt-[34px] pl-[149px]">
          <div className="flex-1 border-t border-l border-[#1c1c30] bg-[#ebe9d6]" />
        </main>
        <TableDialog />
      </div>
      <Callouts />
    </div>
  );
}
